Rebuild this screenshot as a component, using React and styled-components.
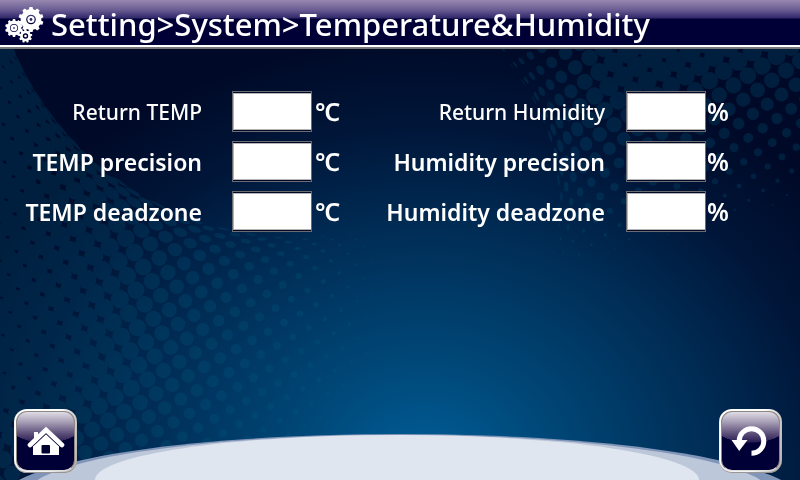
import React from "react";
import styled, { createGlobalStyle } from "styled-components";

const GlobalStyle = createGlobalStyle`
  *, *::before, *::after { box-sizing: border-box; }
  body {
    margin: 0;
    background: #000a28;
    color: #fff;
    font-family: "Noto Sans", "Open Sans", "Noto Sans CJK SC", sans-serif;
    font-weight: 600;
  }
`;

const Page = styled.div`
  position: relative;
  isolation: isolate;
  display: flex;
  flex-direction: column;
  min-height: 100vh;
  overflow: hidden;
`;

const Backdrop = styled.svg`
  position: absolute;
  inset: 0;
  z-index: -1;
  width: 100%;
  height: 100%;
`;

const Header = styled.header`
  display: flex;
  align-items: center;
  gap: 6px;
  height: 49px;
  padding: 0 5px 0 5px;
  border-bottom: 2px solid #77777a;
  background: linear-gradient(#9688b0 0, #6a5c92 10px, #30286a 18px, #000036 19px, #000036 100%);
  box-shadow: inset 0 -2px 0 #fff;
`;

const Title = styled.h1`
  margin: 0;
  font-size: 31px;
  line-height: 44px;
  font-weight: 500;
  white-space: nowrap;
`;

const Form = styled.form`
  flex: 1;
  display: grid;
  grid-template-columns: 340fr 390fr;
  align-items: start;
  padding: 42px 70px 0 0;
`;

const FieldColumn = styled.div`
  display: flex;
  flex-direction: column;
  gap: 9px;
`;

const Field = styled.div`
  display: flex;
  align-items: center;
  height: 41px;
`;

const Label = styled.label`
  flex: 1;
  padding-right: ${(p) => (p.$wide ? 30 : 21)}px;
  font-size: ${(p) => (p.$small ? 21 : 23)}px;
  line-height: 38px;
  font-weight: ${(p) => (p.$small ? 500 : 600)};
  text-align: right;
  white-space: nowrap;
`;

const ValueInput = styled.input`
  width: 80px;
  height: 41px;
  padding: 0 6px;
  border: 1px solid #6c6c70;
  border-radius: 0;
  background: #fff;
  box-shadow: inset 0 1px 0 #000a28, inset 0 -1px 0 #000a28, inset 1px 0 0 #b5b5b8, inset 0 2px 0 #b5b5b8,
    inset 0 -2px 0 #b5b5b8;
  color: #000a28;
  font: inherit;
  font-size: 20px;
  text-align: center;
`;

const Unit = styled.span`
  width: ${(p) => (p.$wide ? 28 : 24)}px;
  padding-left: ${(p) => (p.$wide ? 3 : 1)}px;
  font-size: 25px;
  line-height: 41px;
`;

const Footer = styled.footer`
  display: flex;
  justify-content: space-between;
  padding: 0 18px 7px 14px;
`;

const IconButton = styled.button`
  width: 63px;
  height: 64px;
  padding: 2px;
  border: 0;
  border-radius: 13px;
  background: linear-gradient(100deg, #fff 60%, #b4b0ae);
  box-shadow: inset 0 -1px 1px #8f8b8a;
  cursor: pointer;
`;

const ButtonFace = styled.span`
  display: grid;
  place-items: center;
  height: 100%;
  border: 1px solid #8c8784;
  border-bottom-color: #dedcda;
  border-radius: 11px;
  background: radial-gradient(ellipse 46px 31px at 50% 0, transparent 99%, #000036 100%),
    linear-gradient(#e0dce6 0, #a79fb5 10px, #5a4c78 22px, #281e54 30px, #000036 31px);
`;

const Glyph = styled.svg`
  display: block;
  flex: none;
`;

const LEFT_WAVE = {
  cx: 295, cy: -70, r: 306, fold: 90, from: -20,
  origin: [162, 333], a: [8.7, 14.3], b: [16, -8.9],
  size: (x, y) => (x > 124 ? 9 - 0.033 * (x - 124) : 9 + 0.018 * (124 - x)) - 0.03 * Math.max(0, y - 380),
};

const RIGHT_WAVE = {
  cx: 345, cy: 200, r: 213, fold: 90, from: 500,
  origin: [710, 143], a: [14.3, -9.7], b: [9.7, 14.3],
  size: (x, y) => Math.min(8.6 - 0.055 * (y - 85) - 0.015 * (x - 700), 2.5 + 0.065 * (x - 500)),
};

// Lays out a square lattice of dots and folds it away towards a circular rim.
function buildDots({ cx, cy, r, fold, from, origin, a, b, size }) {
  const dots = [];
  for (let i = -50; i <= 50; i += 1) {
    for (let j = -50; j <= 50; j += 1) {
      const fx = origin[0] + a[0] * i + b[0] * j;
      const fy = origin[1] + a[1] * i + b[1] * j;
      const dx = fx - cx;
      const dy = fy - cy;
      const flat = Math.hypot(dx, dy);
      const d = flat - r + fold / 2;
      if (d < 6) continue;
      const squash = Math.min(1, d / fold);
      const rho = d < fold ? r + (d * d) / (2 * fold) : flat;
      const x = cx + (dx / flat) * rho;
      const y = cy + (dy / flat) * rho;
      const radius = size(x, y);
      if (radius < 0.5 || x < from || x > 820 || y < 20 || y > 500) continue;
      dots.push({
        x: x.toFixed(1),
        y: y.toFixed(1),
        rx: (Math.min(radius, 12.5) * squash).toFixed(1),
        ry: Math.min(radius, 12.5).toFixed(1),
        turn: ((Math.atan2(dy, dx) * 180) / Math.PI).toFixed(0),
      });
    }
  }
  return dots;
}

const leftDots = buildDots(LEFT_WAVE).filter((d) => Number(d.x) < 400);
const rightDots = buildDots(RIGHT_WAVE);

function Dots({ dots, opacity }) {
  return (
    <g fill="#005c80" opacity={opacity}>
      {dots.map((d) => (
        <ellipse key={`${d.x},${d.y}`} rx={d.rx} ry={d.ry} transform={`translate(${d.x} ${d.y}) rotate(${d.turn})`} />
      ))}
    </g>
  );
}

function Scenery() {
  return (
    <Backdrop viewBox="0 0 800 480" preserveAspectRatio="none" aria-hidden="true">
      <defs>
        <radialGradient id="glow" gradientUnits="userSpaceOnUse" cx="0" cy="0" r="1" gradientTransform="translate(425 470) scale(505 430)">
          <stop offset="0" stopColor="#005f9a" />
          <stop offset="0.25" stopColor="#004878" />
          <stop offset="0.55" stopColor="#002e57" />
          <stop offset="0.8" stopColor="#001639" />
          <stop offset="1" stopColor="#000a28" />
        </radialGradient>
        <clipPath id="dome"><ellipse cx="400" cy="500" rx="400" ry="66" /></clipPath>
      </defs>
      <rect width="800" height="480" fill="url(#glow)" />
      <Dots dots={leftDots} opacity="0.25" />
      <Dots dots={rightDots} opacity="0.25" />
      <g clipPath="url(#dome)">
        <rect width="800" height="480" fill="#8095b7" />
        <ellipse cx="399" cy="494" rx="372" ry="59" fill="#bcc7da" />
        <ellipse cx="397" cy="480" rx="302" ry="45" fill="#e0e6f0" />
      </g>
    </Backdrop>
  );
}

function gearPath(cx, cy, outer, inner, hole, teeth) {
  const step = (Math.PI * 2) / teeth;
  const at = (angle, radius) => `${(cx + Math.cos(angle) * radius).toFixed(2)} ${(cy + Math.sin(angle) * radius).toFixed(2)}`;
  let d = "";
  for (let i = 0; i < teeth; i += 1) {
    const t = i * step - Math.PI / 2;
    d += `${i ? "L" : "M"}${at(t - step * 0.32, inner)}L${at(t - step * 0.2, outer)}L${at(t + step * 0.2, outer)}L${at(t + step * 0.32, inner)}`;
  }
  return `${d}ZM${cx - hole} ${cy}a${hole} ${hole} 0 1 0 ${hole * 2} 0a${hole} ${hole} 0 1 0 ${-hole * 2} 0Z`;
}

function GearsIcon() {
  return (
    <Glyph width="40" height="40" viewBox="0 0 40 40" aria-hidden="true">
      <g fill="#fff" fillRule="evenodd">
        <path d={gearPath(26, 15.5, 12.6, 10.4, 4.8, 10)} />
        <circle cx="26" cy="15.5" r="3.6" />
        <circle cx="26" cy="15.5" r="1.4" fill="#30286a" />
        <path d={gearPath(9, 24, 9, 7.4, 4, 10)} />
        <circle cx="9" cy="24" r="3.3" />
        <circle cx="9" cy="24" r="1" fill="#55508a" />
        <path d={gearPath(20.5, 32, 6.8, 5.4, 2.7, 9)} />
        <circle cx="20.5" cy="32" r="1.3" />
      </g>
    </Glyph>
  );
}

function HomeIcon() {
  return (
    <Glyph width="38" height="30" viewBox="0 0 38 30" aria-hidden="true">
      <path d="M7 14V6h4v4" fill="#fff" />
      <path d="M3 19 19 4l16 15" fill="none" stroke="#fff" strokeWidth="4.6" strokeLinecap="round" />
      <path d="M6 20 19 8l13 12v9H6Z" fill="#fff" />
      <path d="M5 21 19 7.8 33 21" fill="none" stroke="#211a50" strokeWidth="1" />
      <rect x="14.5" y="19" width="8.5" height="8.5" rx="1" fill="#000030" />
    </Glyph>
  );
}

function ReturnIcon() {
  return (
    <Glyph width="40" height="32" viewBox="0 0 40 32" aria-hidden="true">
      <path d="M8.2 16A12.3 12.3 0 1 1 20.5 28.3" fill="none" stroke="#fff" strokeWidth="5" />
      <path d="M0.5 15h16L8.2 26Z" fill="#fff" />
    </Glyph>
  );
}

const COLUMNS = [
  {
    unit: "℃",
    wide: true,
    fields: [
      { id: "return-temp", label: "Return TEMP", small: true },
      { id: "temp-precision", label: "TEMP precision" },
      { id: "temp-deadzone", label: "TEMP deadzone" },
    ],
  },
  {
    unit: "%",
    wide: false,
    fields: [
      { id: "return-humidity", label: "Return Humidity", small: true },
      { id: "humidity-precision", label: "Humidity precision" },
      { id: "humidity-deadzone", label: "Humidity deadzone" },
    ],
  },
];

export default function App() {
  return (
    <Page>
      <GlobalStyle />
      <Scenery />
      <Header>
        <GearsIcon />
        <Title>Setting&gt;System&gt;Temperature&amp;Humidity</Title>
      </Header>
      <Form>
        {COLUMNS.map(({ unit, wide, fields }) => (
          <FieldColumn key={unit}>
            {fields.map(({ id, label, small }) => (
              <Field key={id}>
                <Label htmlFor={id} $wide={wide} $small={small}>{label}</Label>
                <ValueInput id={id} type="text" inputMode="decimal" />
                <Unit $wide={wide}>{unit}</Unit>
              </Field>
            ))}
          </FieldColumn>
        ))}
      </Form>
      <Footer>
        <IconButton type="button" aria-label="Home"><ButtonFace><HomeIcon /></ButtonFace></IconButton>
        <IconButton type="button" aria-label="Back"><ButtonFace><ReturnIcon /></ButtonFace></IconButton>
      </Footer>
    </Page>
  );
}
